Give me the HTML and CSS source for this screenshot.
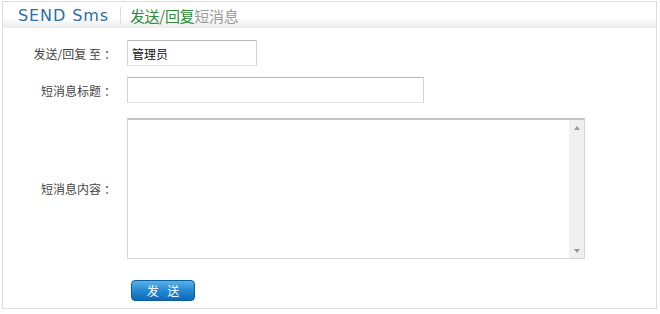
FILE: index.html
```html
<!DOCTYPE html>
<html lang="zh-CN">
<head>
  <meta charset="UTF-8">
  <title>SEND Sms</title>
  <link rel="stylesheet" href="styles.css">
</head>
<body>

  <div class="panel">
    <div class="head">
      <span class="brand">SEND Sms</span>
      <span class="sep"></span>
      <span class="title"><span class="green">发送/回复</span>短消息</span>
    </div>

    <form class="form">
      <div class="row row-to">
        <label class="label">发送/回复 至<span class="colon">：</span></label>
        <input type="text" class="field field-to" value="管理员">
      </div>

      <div class="row row-subject">
        <label class="label">短消息标题<span class="colon">：</span></label>
        <input type="text" class="field field-subject">
      </div>

      <div class="row row-body">
        <label class="label">短消息内容<span class="colon">：</span></label>
        <div class="textbox">
          <textarea class="area"></textarea>
          <div class="scroll">
            <span class="arrow up"></span>
            <span class="arrow down"></span>
          </div>
        </div>
      </div>

      <div class="row row-btn">
        <span></span>
        <button type="button" class="send">发 送</button>
      </div>
    </form>
  </div>

</body>
</html>
```

FILE: styles.css
```css
body {
  margin: 0;
  background: #fff;
  font-family: "Noto Sans CJK SC", "DejaVu Sans", sans-serif;
  font-size: 12px;
  color: #333;
}

.panel {
  width: 653px;
  height: 306px;
  margin: 1px 0 0 2px;
  border: 1px solid #dcdcdc;
  background: #fff;
}

.head {
  height: 26px;
  display: flex;
  align-items: center;
  background: linear-gradient(to bottom, #fff 0%, #fff 60%, #ebebeb 100%);
}

.brand {
  margin-left: 15px;
  font-family: "DejaVu Sans", sans-serif;
  font-size: 16px;
  letter-spacing: 0.9px;
  color: #2b6ea8;
}

.sep {
  width: 1px;
  height: 17px;
  margin: 0 9px 0 11px;
  background: #dcdcdc;
}

.title {
  font-size: 15px;
  letter-spacing: -0.3px;
  color: #9a9a9a;
}

.green {
  color: #2f8a3b;
}

.form {
  display: flex;
  flex-direction: column;
}

.row {
  display: grid;
  grid-template-columns: 110px 1fr;
  column-gap: 14px;
  align-items: center;
}

.label {
  text-align: right;
  color: #444;
  white-space: nowrap;
}

.colon {
  display: inline-block;
  width: 9px;
  padding-left: 3px;
}

.row-to { margin-top: 12px; }
.row-subject { margin-top: 11px; }
.row-body { margin-top: 15px; }
.row-btn { margin-top: 21px; }

.field {
  box-sizing: border-box;
  height: 26px;
  padding: 0 4px;
  border: 1px solid #d4d4d4;
  border-top-color: #b8b8b8;
  border-bottom-color: #e6e6e6;
  font-family: "Noto Sans CJK SC", sans-serif;
  font-size: 12px;
  color: #111;
  outline: none;
}

.field-to { width: 130px; }
.field-subject { width: 297px; }

.textbox {
  box-sizing: border-box;
  width: 458px;
  height: 141px;
  display: flex;
  border: 1px solid #d6d6d6;
  border-top: 2px solid #c4c4c4;
}

.area {
  flex: 1;
  border: none;
  resize: none;
  outline: none;
  padding: 4px;
}

.scroll {
  width: 15px;
  background: #efefef;
  display: flex;
  flex-direction: column;
  justify-content: space-between;
  align-items: center;
  padding: 6px 0 5px;
}

.arrow {
  width: 0;
  height: 0;
  border-left: 3px solid transparent;
  border-right: 3px solid transparent;
}

.arrow.up { border-bottom: 4px solid #999; }
.arrow.down { border-top: 4px solid #999; }

.send {
  justify-self: start;
  width: 64px;
  height: 21px;
  margin-left: 4px;
  padding: 0;
  border: 1px solid #0d5d9e;
  border-radius: 4px;
  background: linear-gradient(to bottom, #5cb2ea 0%, #2488d2 50%, #0e6ab8 100%);
  color: #fff;
  font-family: "Noto Sans CJK SC", sans-serif;
  font-size: 12px;
  letter-spacing: 3px;
  text-indent: 3px;
  cursor: pointer;
}
```
